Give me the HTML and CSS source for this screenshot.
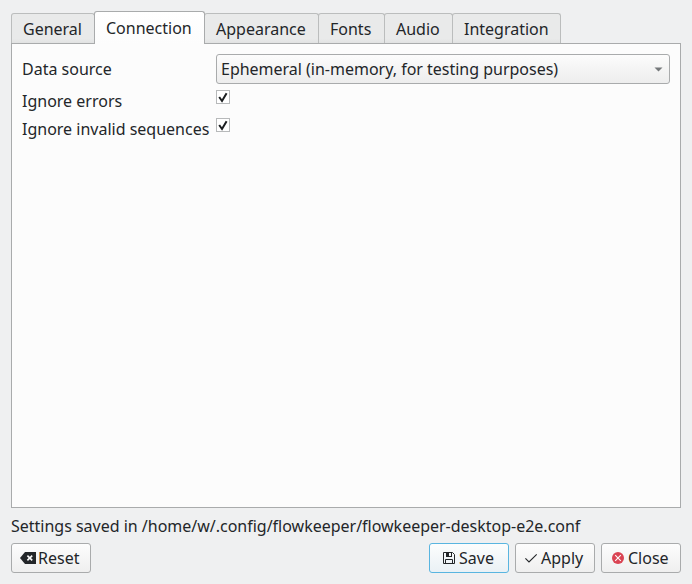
FILE: index.html
```html
<!DOCTYPE html>
<html lang="en">
<head>
<meta charset="utf-8">
<title>Settings</title>
<link rel="stylesheet" href="styles.css">
</head>
<body>
<main class="dialog">
  <nav class="tabs">
    <div class="tab w-general">General</div>
    <div class="tab active w-connection">Connection</div>
    <div class="tab w-appearance">Appearance</div>
    <div class="tab w-fonts">Fonts</div>
    <div class="tab w-audio">Audio</div>
    <div class="tab w-integration">Integration</div>
  </nav>
  <section class="panel">
    <div class="label source">Data source</div>
    <div class="combo"><span>Ephemeral (in-memory, for testing purposes)</span>
      <svg width="9" height="5" viewBox="0 0 9 5"><path d="M.5 .5H8.5L4.5 4.5Z" fill="#75787a"/></svg>
    </div>
    <div class="label">Ignore errors</div>
    <div class="check"><svg width="14" height="14" viewBox="0 0 14 14"><path d="M3.2 7L6 11L10.6 3.2" fill="none" stroke="#1b1e20" stroke-width="2"/></svg></div>
    <div class="label">Ignore invalid sequences</div>
    <div class="check"><svg width="14" height="14" viewBox="0 0 14 14"><path d="M3.2 7L6 11L10.6 3.2" fill="none" stroke="#1b1e20" stroke-width="2"/></svg></div>
  </section>
  <div class="status">Settings saved in /home/w/.config/flowkeeper/flowkeeper-desktop-e2e.conf</div>
  <footer class="buttons">
    <div class="button reset">
      <svg width="16" height="16" viewBox="0 0 16 16"><path d="M0 8L5 2H16V14H5Z" fill="#232629"/><path d="M7.4 5.6L12.2 10.4M12.2 5.6L7.4 10.4" stroke="#fcfcfc" stroke-width="1.6"/></svg>
      <span>Reset</span>
    </div>
    <div class="spacer"></div>
    <div class="button save">
      <svg width="16" height="16" viewBox="0 0 16 16"><path d="M2.5 2.5H11.5L13.5 4.5V13.5H2.5Z" fill="none" stroke="#232629"/><path d="M5 2H11V7H5ZM8 3V6H10V3Z" fill="#232629" fill-rule="evenodd"/><path d="M4.5 13.5V9.5H11.5V13.5" fill="none" stroke="#232629"/></svg>
      <span>Save</span>
    </div>
    <div class="button apply">
      <svg width="16" height="16" viewBox="0 0 16 16"><path d="M2.4 8.4L6 12L13.7 4.3" fill="none" stroke="#232629" stroke-width="1.1"/></svg>
      <span>Apply</span>
    </div>
    <div class="button close">
      <svg width="16" height="16" viewBox="0 0 16 16"><circle cx="8" cy="8" r="6" fill="#da4453"/><path d="M5.2 5.2L10.8 10.8M10.8 5.2L5.2 10.8" stroke="#fcfcfc" stroke-width="1.1"/></svg>
      <span>Close</span>
    </div>
  </footer>
</main>
</body>
</html>
```
FILE: styles.css
```css
* { box-sizing: border-box; }
body {
  margin: 0;
  background: #eff0f1;
  color: #232629;
  font: 16px/22px "Noto Sans", sans-serif;
  white-space: nowrap;
}
svg { display: block; flex: none; }
.dialog {
  width: 692px;
  height: 584px;
  padding: 11px;
  display: flex;
  flex-direction: column;
}
.tabs { display: flex; align-items: flex-end; height: 32px; }
.tab {
  height: 30px;
  margin-right: -1px;
  padding: 4px 0 0 11px;
  background: linear-gradient(#e9eaea 85%, #e1e2e2);
  border: 1px solid #bbbdbd;
  border-bottom: 0;
  border-radius: 3px 3px 0 0;
}
.tab.active {
  position: relative;
  height: 33px;
  margin-bottom: -1px;
  padding-top: 5px;
  background: linear-gradient(#fff, #fcfcfc);
  border-color: #a9abac;
}
.w-general { width: 84px; }
.w-connection { width: 111px; }
.w-appearance { width: 115px; }
.w-fonts { width: 67px; }
.w-audio { width: 69px; }
.w-integration { width: 109px; }
.panel {
  height: 465px;
  border: 1px solid #a9abac;
  background: #fcfcfc;
  padding: 10px;
  display: grid;
  grid-template-columns: 188px 1fr;
  grid-template-rows: 30px 22px 22px;
  column-gap: 6px;
  row-gap: 6px;
}
.source { padding-top: 4px; }
.combo {
  height: 30px;
  border: 1px solid #a9abac;
  border-radius: 3px;
  background: linear-gradient(#fcfcfc, #ededed);
  display: flex;
  align-items: center;
  justify-content: space-between;
  padding: 0 6px 0 4px;
}
.combo span { letter-spacing: -0.01px; }
.check { width: 14px; height: 14px; background: #fff; box-shadow: inset 0 0 0 1px #b7b9ba; }
.status { margin-top: 7px; height: 22px; letter-spacing: -0.01px; }
.buttons { display: flex; gap: 6px; margin-top: 6px; }
.spacer { flex: 1; }
.button {
  width: 80px;
  height: 30px;
  border: 1px solid #a9abac;
  border-radius: 3px;
  background: linear-gradient(#fdfdfd, #efefef);
  display: flex;
  align-items: center;
  gap: 2px;
}
.reset { padding-left: 8px; }
.save {
  padding-left: 11px;
  border-color: #59b5e0;
  background: linear-gradient(#fcfdfd, #eaf1f5);
}
.apply { padding-left: 7px; }
.close { padding-left: 8px; }
```
